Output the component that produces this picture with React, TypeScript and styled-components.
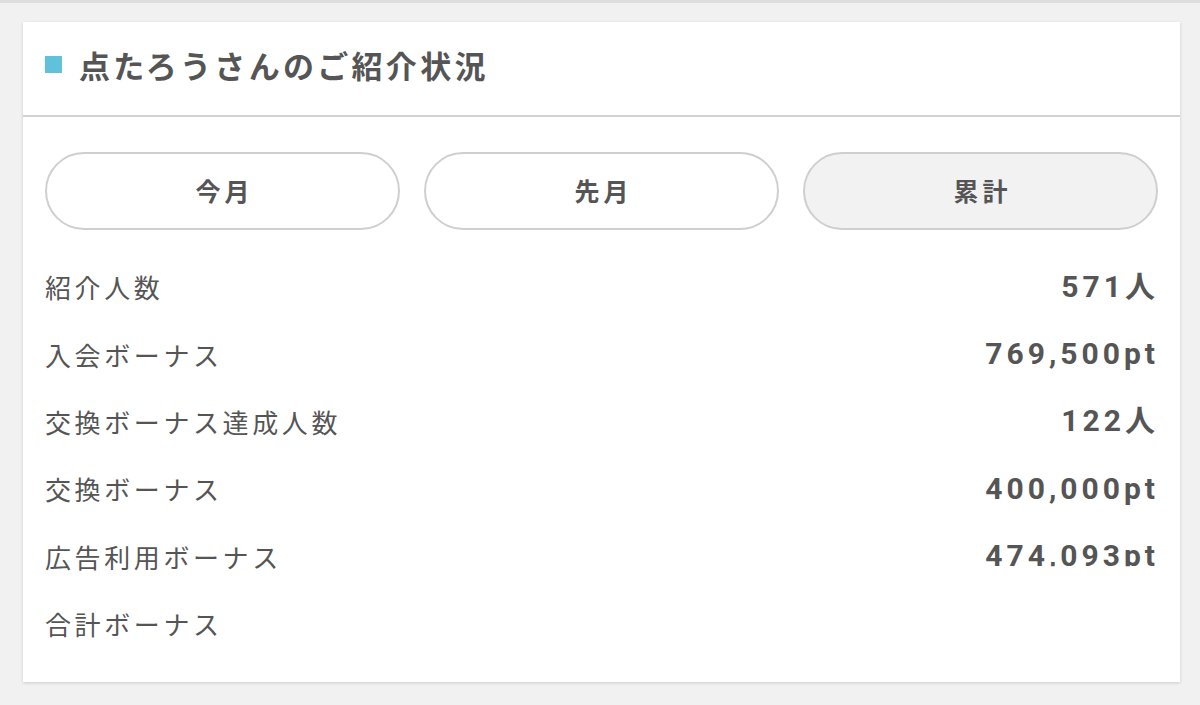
import React from "react";
import styled, { createGlobalStyle } from "styled-components";

const Global = createGlobalStyle`
  html, body { margin: 0; padding: 0; }
  body {
    background: #f1f1f1;
    font-family: "Noto Sans CJK JP", "Noto Sans", sans-serif;
    color: #555;
  }
`;

const Page = styled.div`
  min-height: 705px;
  box-sizing: border-box;
  border-top: 3px solid #dedede;
  padding: 19px 20px 20px 23px;
`;

const Card = styled.section`
  background: #fff;
  box-shadow: 0 1px 3px rgba(0, 0, 0, 0.16);
  height: 660px;
  box-sizing: border-box;
`;

const Header = styled.header`
  height: 95px;
  box-sizing: border-box;
  border-bottom: 2px solid #d2d2d2;
  display: flex;
  align-items: center;
  padding: 0 22px 6px;
  gap: 17px;
`;

const Marker = styled.span`
  width: 17px;
  height: 17px;
  background: #5fc1da;
  flex: none;
  margin-top: -2px;
`;

const Title = styled.h2`
  margin: 0;
  font-size: 31px;
  font-weight: 700;
  letter-spacing: 3.3px;
  color: #555;
  line-height: 1;
  margin-top: -2px;
`;

const Body = styled.div`
  padding: 35px 22px 23px;
`;

const Tabs = styled.div`
  display: grid;
  grid-template-columns: repeat(3, 1fr);
  gap: 24px;
  margin-bottom: 23px;
`;

const Tab = styled.button<{ $active?: boolean }>`
  height: 78px;
  border: 2px solid #cfcfcf;
  border-radius: 39px;
  background: ${(p) => (p.$active ? "#f2f2f2" : "#fff")};
  font-family: "Noto Sans CJK JP", sans-serif;
  font-size: 25px;
  font-weight: 700;
  letter-spacing: 4px;
  color: #555;
  padding: 0 0 3px 4px;
  cursor: pointer;
`;

const Row = styled.div`
  display: flex;
  align-items: center;
  justify-content: space-between;
  height: 67.4px;
`;

const Label = styled.span`
  font-size: 26px;
  letter-spacing: 3.6px;
  color: #555;
  font-weight: 400;
`;

const Value = styled.span<{ $cut?: boolean }>`
  font-family: Roboto, "Noto Sans CJK JP", sans-serif;
  font-size: 30px;
  font-weight: 700;
  letter-spacing: 4px;
  color: #555;
  line-height: 34px;
  margin-right: -1px;
  ${(p) => p.$cut && `clip-path: inset(0 0 7px 0);`}
`;

const rows: { label: string; value?: string; cut?: boolean }[] = [
  { label: "紹介人数", value: "571人" },
  { label: "入会ボーナス", value: "769,500pt" },
  { label: "交換ボーナス達成人数", value: "122人" },
  { label: "交換ボーナス", value: "400,000pt" },
  { label: "広告利用ボーナス", value: "474,093pt", cut: true },
  { label: "合計ボーナス" },
];

export default function App() {
  return (
    <>
      <Global />
      <Page>
        <Card>
          <Header>
            <Marker />
            <Title>点たろうさんのご紹介状況</Title>
          </Header>
          <Body>
            <Tabs>
              <Tab>今月</Tab>
              <Tab>先月</Tab>
              <Tab $active>累計</Tab>
            </Tabs>
            {rows.map((r) => (
              <Row key={r.label}>
                <Label>{r.label}</Label>
                {r.value && <Value $cut={r.cut}>{r.value}</Value>}
              </Row>
            ))}
          </Body>
        </Card>
      </Page>
    </>
  );
}
